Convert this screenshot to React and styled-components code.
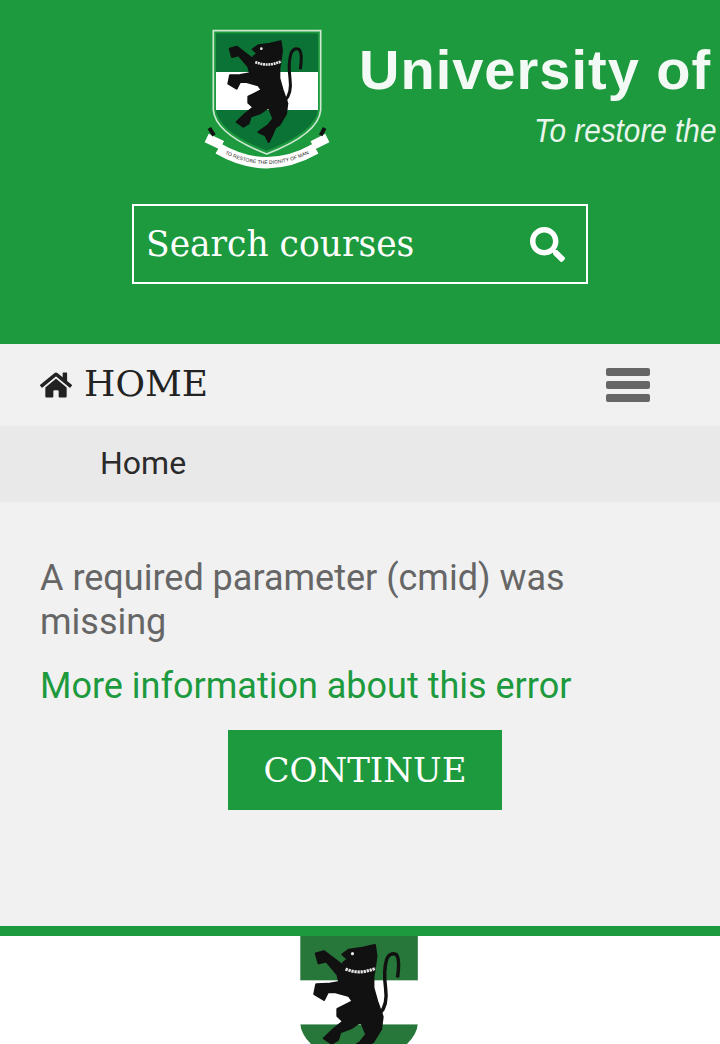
import React from "react";
import styled, { createGlobalStyle } from "styled-components";
import { FaHome, FaSearch } from "react-icons/fa";

const GREEN = "#1c9a3d";
const SLAB = `"DejaVu Serif", "Liberation Serif", serif`;

function Crest({ width, height, band, ribbon }) {
    return (
        <svg width={width} height={height} viewBox="0 0 480 525">
            <defs>
                <clipPath id={`shield-${band.slice(1)}`}>
                    <path d="M78 70H384V298Q378 365 230 422Q84 365 78 298Z" />
                </clipPath>
            </defs>
            {ribbon && (
                <path
                    d="M70 62H392V300Q386 372 230 432Q76 372 70 300Z"
                    fill="none"
                    stroke="#cfe8d4"
                    strokeWidth="5"
                />
            )}
            <g clipPath={`url(#shield-${band.slice(1)})`}>
                <rect x="60" y="60" width="340" height="126" fill={band} />
                <rect x="60" y="186" width="340" height="114" fill="#fff" />
                <rect x="60" y="300" width="340" height="140" fill={band} />
            </g>
            <path
                d="M285 272Q306 250 300 205Q294 160 303 130Q312 112 327 118Q338 128 331 178"
                fill="none"
                stroke="#111"
                strokeWidth="9"
            />
            <path
                fill="#111"
                stroke="#111"
                strokeWidth="6"
                strokeLinejoin="round"
                d="M188 118L205 106L240 101L272 94L276 122L272 152L268 176L268 205L278 240L292 280L288 312L268 345L256 352L246 376L236 396L226 376L205 366L234 346L250 326L236 292L210 310L182 320L176 340L160 350L140 336L165 312L190 292L175 278L175 260L215 240L205 226L170 216L150 216L140 236L115 221L120 196L150 195L180 190L175 170L146 136L126 141L119 116L140 110L166 130L195 152L190 140L202 130Z"
            />
            <path d="M196 156Q232 172 274 154" fill="none" stroke="#e8e8e8" strokeWidth="8" strokeDasharray="6 2" />
            <circle cx="214" cy="116" r="4" fill="#e6f2e6" />
            {ribbon && (
                <>
                    <path d="M50 384L96 406M412 384L368 406" stroke="#fff" strokeWidth="28" />
                    <path id="ribbon-curve" d="M85 416Q230 500 377 416" fill="none" stroke="#fff" strokeWidth="34" />
                    <path d="M58 354L72 376M404 354L392 376" stroke="#111" strokeWidth="12" />
                    <text fontFamily="Liberation Sans, sans-serif" fontSize="15" fill="#222">
                        <textPath href="#ribbon-curve" startOffset="50%" textAnchor="middle" dominantBaseline="middle">
                            TO RESTORE THE DIGNITY OF MAN
                        </textPath>
                    </text>
                </>
            )}
        </svg>
    );
}

function App() {
    return (
        <Page>
            <GlobalStyle />
            <Header>
                <Banner>
                    <Crest width={160} height={175} band="#0b7336" ribbon />
                    <BannerText>
                        <UniversityName>University of</UniversityName>
                        <Motto>To restore the</Motto>
                    </BannerText>
                </Banner>
                <SearchBox>
                    <SearchInput placeholder="Search courses" />
                    <FaSearch size={35} color="#fff" />
                </SearchBox>
            </Header>
            <NavBar>
                <Brand>
                    <FaHome size={32} />
                    <BrandLabel>HOME</BrandLabel>
                </Brand>
                <MenuButton type="button">
                    <MenuBar />
                    <MenuBar />
                    <MenuBar />
                </MenuButton>
            </NavBar>
            <Breadcrumb>Home</Breadcrumb>
            <Content>
                <ErrorText>A required parameter (cmid) was missing</ErrorText>
                <MoreLink href="#">More information about this error</MoreLink>
                <ContinueRow>
                    <ContinueButton type="button">CONTINUE</ContinueButton>
                </ContinueRow>
            </Content>
            <Footer>
                <Crest width={185} height={202} band="#27763a" />
            </Footer>
        </Page>
    );
}

const GlobalStyle = createGlobalStyle`
    html, body {
        margin: 0;
        padding: 0;
        background: #fff;
        overflow: hidden;
    }
    * {
        box-sizing: border-box;
    }
`;
const Page = styled.div`
    width: 720px;
    height: 1044px;
    overflow: hidden;
    background-color: #f1f1f1;
    font-family: Roboto, "Liberation Sans", sans-serif;
`;
const Header = styled.header`
    height: 344px;
    background-color: ${GREEN};
    padding-top: 10px;
    overflow: hidden;
`;
const Banner = styled.div`
    display: flex;
    height: 175px;
    margin-left: 190px;
    & > svg {
        flex: none;
    }
`;
const BannerText = styled.div`
    flex: none;
    margin-left: 9px;
    padding-top: 27px;
    color: #fff;
    font-family: "Liberation Sans", Arial, sans-serif;
`;
const UniversityName = styled.div`
    font-size: 56px;
    line-height: 66px;
    font-weight: bold;
    letter-spacing: 1px;
    white-space: nowrap;
    opacity: 0.95;
`;
const Motto = styled.div`
    margin-left: 175px;
    margin-top: 9px;
    font-size: 34px;
    line-height: 36px;
    font-style: italic;
    white-space: nowrap;
    transform: scaleX(0.875);
    transform-origin: left;
    opacity: 0.9;
`;
const SearchBox = styled.div`
    display: flex;
    align-items: center;
    justify-content: space-between;
    width: 456px;
    height: 80px;
    margin: 19px 0 0 132px;
    padding: 0 21px 0 12px;
    border: 2px solid #fff;
`;
const SearchInput = styled.input`
    width: 340px;
    border: none;
    outline: none;
    padding: 0;
    background: transparent;
    color: #fff;
    font-family: ${SLAB};
    font-size: 34.5px;
    &::placeholder {
        color: #fff;
        opacity: 1;
    }
`;
const NavBar = styled.nav`
    display: flex;
    align-items: center;
    justify-content: space-between;
    height: 82px;
    padding: 0 70px 0 40px;
    background-color: #f1f1f1;
`;
const Brand = styled.a`
    display: flex;
    align-items: center;
    gap: 12px;
    color: #222;
`;
const BrandLabel = styled.span`
    font-family: ${SLAB};
    font-size: 36px;
    position: relative;
    top: -2px;
`;
const MenuButton = styled.button`
    display: flex;
    flex-direction: column;
    gap: 5px;
    width: 44px;
    padding: 0;
    border: none;
    background: none;
`;
const MenuBar = styled.span`
    display: block;
    height: 8px;
    border-radius: 2px;
    background-color: #666;
`;
const Breadcrumb = styled.div`
    height: 76px;
    padding-left: 100px;
    background-color: #e9e9e9;
    color: #2b2b2b;
    font-size: 32px;
    line-height: 75px;
`;
const Content = styled.main`
    height: 424px;
    padding: 54px 40px 0;
`;
const ErrorText = styled.p`
    margin: 0;
    color: #666;
    font-size: 36px;
    line-height: 44px;
`;
const MoreLink = styled.a`
    display: block;
    margin-top: 20px;
    color: ${GREEN};
    font-size: 36px;
    line-height: 44px;
    text-decoration: none;
`;
const ContinueRow = styled.div`
    display: flex;
    justify-content: center;
    margin-top: 22px;
    padding-left: 10px;
`;
const ContinueButton = styled.button`
    width: 274px;
    height: 80px;
    padding: 0;
    border: none;
    background-color: ${GREEN};
    color: #fff;
    font-family: ${SLAB};
    font-size: 34px;
`;
const Footer = styled.footer`
    display: flex;
    justify-content: center;
    height: 118px;
    border-top: 10px solid ${GREEN};
    background-color: #fff;
    overflow: hidden;
    & > svg {
        flex: none;
        margin: -27px 0 0 5px;
    }
`;

export default App;
